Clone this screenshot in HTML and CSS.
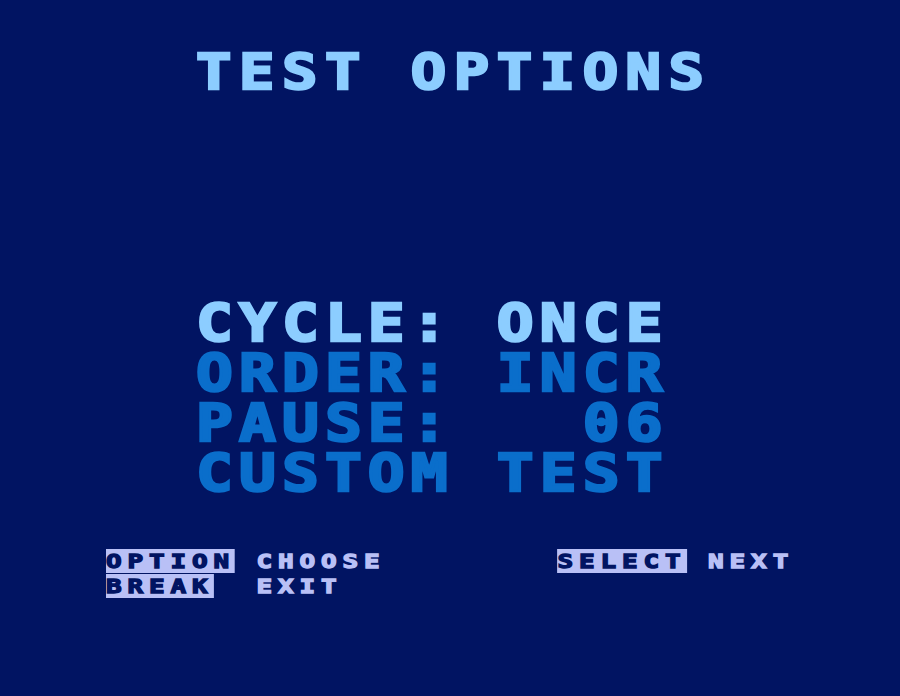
FILE: index.html
```html
<!DOCTYPE html>
<html>
<head>
<meta charset="utf-8">
<link rel="stylesheet" href="styles.css">
</head>
<body>
<div class="screen">
  <div class="title-wrap"><div class="big title">TEST OPTIONS</div></div>
  <div class="menu-wrap">
    <div class="big menu"><div class="row active">CYCLE: ONCE</div><div class="row">ORDER: INCR</div><div class="row">PAUSE:   06</div><div class="row">CUSTOM TEST</div></div>
  </div>
  <div class="help-wrap">
    <div class="small help"><div class="row"><span class="inv">OPTION</span> CHOOSE        <span class="inv">SELECT</span> NEXT</div><div class="row"><span class="inv">BREAK</span>  EXIT</div></div>
  </div>
</div>
</body>
</html>
```
FILE: styles.css
```css
html, body {
  margin: 0;
  padding: 0;
  background: #011462;
}
.screen {
  width: 900px;
  height: 696px;
  background: #011462;
  overflow: hidden;
  font-family: "DejaVu Sans Mono", "Liberation Mono", monospace;
  font-weight: bold;
}
.big, .small {
  white-space: pre;
  transform-origin: 0 0;
}
.big {
  font-size: 51px;
  line-height: 50px;
  letter-spacing: 5.1px;
  transform: scaleX(1.2);
  -webkit-text-stroke: 2.5px currentColor;
}
.title-wrap {
  padding: 48px 0 0 196px;
  height: 50px;
}
.title {
  font-size: 49px;
  letter-spacing: 6.3px;
  color: #8ccdff;
}
.menu-wrap {
  padding: 201px 0 0 196px;
  height: 200px;
}
.menu {
  color: #0a6ecb;
}
.menu .active {
  color: #8ccdff;
}
.help-wrap {
  padding: 50px 0 0 106px;
}
.small {
  font-size: 20px;
  line-height: 25px;
  letter-spacing: 4.5px;
  transform: scaleX(1.3);
  color: #b9c0f6;
  -webkit-text-stroke: 1.3px currentColor;
}
.inv {
  background: #b9c0f6;
  color: #011462;
}
```
